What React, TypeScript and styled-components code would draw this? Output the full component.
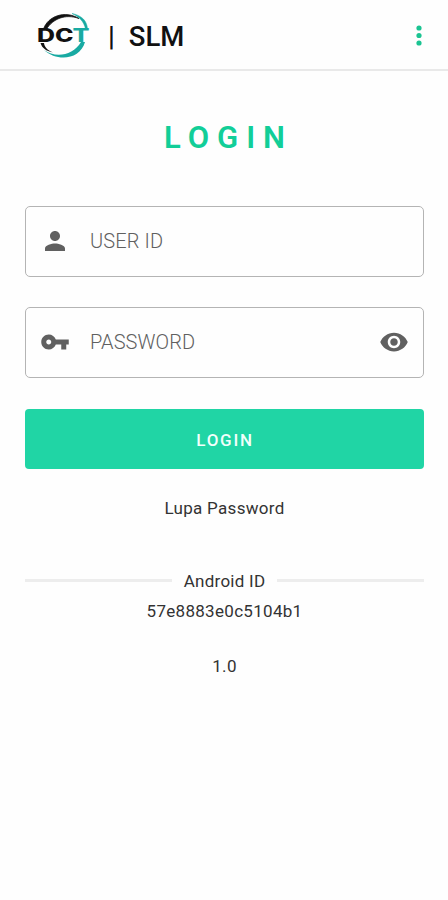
import React from "react";
import styled, { createGlobalStyle } from "styled-components";

const GlobalStyle = createGlobalStyle`
  * { box-sizing: border-box; }
  body { margin: 0; background: #fefefe; font-family: Roboto, "Liberation Sans", sans-serif; }
`;

const Screen = styled.div`
  min-height: 900px;
  display: flex;
  flex-direction: column;
  background: #fefefe;
`;

const Header = styled.header`
  height: 71px;
  display: flex;
  align-items: center;
  padding: 0 22px 0 34px;
  border-bottom: 2px solid #e9e9e9;
`;

const Brand = styled.div`
  display: flex;
  align-items: center;
  margin-left: 16px;
  padding-top: 5px;
  gap: 14px;
  font-size: 27.5px;
  line-height: 32px;
  font-weight: 500;
  color: #111;
`;

const MenuButton = styled.button`
  margin-left: auto;
  padding: 2px 0 0;
  border: 0;
  background: none;
  display: flex;
`;

const Form = styled.main`
  display: flex;
  flex-direction: column;
  padding: 49px 24px 0 25px;
`;

const Title = styled.h1`
  margin: 0 0 50px;
  text-align: center;
  font-size: 31px;
  line-height: 36px;
  font-weight: 600;
  letter-spacing: 8px;
  text-indent: 8px;
  color: #12ce98;
`;

const Field = styled.label`
  height: 71px;
  margin-bottom: 30px;
  padding: 0 14px 1px;
  display: flex;
  align-items: center;
  border: 1.5px solid #b4b4b4;
  border-radius: 5px;
  color: #606060;
`;

const FieldText = styled.span`
  flex: 1;
  margin-left: 20px;
  font-size: 20px;
  line-height: 24px;
  font-weight: 350;
  letter-spacing: 0.1px;
`;

const Submit = styled.button`
  height: 60px;
  margin-top: 1px;
  padding: 2px 0 0;
  border: 0;
  border-radius: 4px;
  background: #20d5a5;
  color: #f2fffb;
  font: 500 17px/20px Roboto, sans-serif;
  letter-spacing: 1.7px;
  text-indent: 1px;
`;

const Caption = styled.p<{ $top: number; $spacing: number }>`
  margin: ${(p) => p.$top}px 0 0;
  text-align: center;
  font-size: 17px;
  line-height: 20px;
  letter-spacing: ${(p) => p.$spacing}px;
  color: #333;
`;

const Divider = styled.div`
  margin-top: 53px;
  display: flex;
  align-items: center;
  gap: 12px;
  font-size: 17px;
  line-height: 20px;
  letter-spacing: 0.25px;
  color: #333;
`;

const Rule = styled.span`
  flex: 1;
  height: 3px;
  margin-bottom: 2px;
  background: #ededed;
`;

const Logo = () => (
  <svg width="58" height="48" viewBox="34 11 58 48" role="img" aria-label="DCT">
    <path d="M43.500 29 C48 16 65 10 79 18.500 C65 13.500 53 19 46.500 29Z" fill="#111" stroke="#111" strokeWidth=".8" />
    <path d="M72 13.500 C82 15.500 87 21 87.500 29 H85.500 C84 21.500 79 16.500 72 13.500Z" fill="#18aaa2" stroke="#18aaa2" strokeWidth=".5" />
    <path d="M40.500 43 C42 48 46 51 53 52.500 C47 50 44.500 47 44 43Z" fill="#111" />
    <path d="M44 50 C55 58 73 56 81 42 H85 C80 60 57 62 44 50Z" fill="#18aaa2" />
    <g fontFamily="Inter, sans-serif" fontWeight="800" fontSize="18.500">
      <text x="37" y="42.200" textLength="36.500" lengthAdjust="spacingAndGlyphs" fill="#111">DC</text>
      <text x="72.500" y="42.200" textLength="17" lengthAdjust="spacingAndGlyphs" fill="#18aaa2">T</text>
    </g>
  </svg>
);

const Glyph = ({ d, box = "0 0 24 24" }: { d: string; box?: string }) => (
  <svg width="30" height="30" viewBox={box} fill="currentColor" aria-hidden="true">
    <path d={d} />
  </svg>
);

const PERSON = "M12 12c2.210 0 4-1.790 4-4s-1.790-4-4-4-4 1.790-4 4 1.790 4 4 4zm0 2c-2.670 0-8 1.340-8 4v2h16v-2c0-2.660-5.330-4-8-4z";
const KEY = "M12.650 10C11.830 7.670 9.610 6 7 6c-3.310 0-6 2.690-6 6s2.690 6 6 6c2.610 0 4.830-1.670 5.650-4H17v4h4v-4h2v-4H12.650zM7 14c-1.100 0-2-.9-2-2s.9-2 2-2 2 .9 2 2-.9 2-2 2z";
const EYE = "M12 4.500C7 4.500 2.730 7.610 1 12c1.730 4.390 6 7.500 11 7.500s9.270-3.110 11-7.500c-1.730-4.390-6-7.500-11-7.500zM12 17c-2.760 0-5-2.240-5-5s2.240-5 5-5 5 2.240 5 5-2.240 5-5 5zm0-8c-1.660 0-3 1.340-3 3s1.340 3 3 3 3-1.340 3-3-1.340-3-3-3z";

export default function App() {
  return (
    <Screen>
      <GlobalStyle />
      <Header>
        <Logo />
        <Brand>
          <span>|</span>
          <span>SLM</span>
        </Brand>
        <MenuButton aria-label="Menu">
          <svg width="14" height="24" viewBox="0 0 14 24" fill="#1bc492">
            <circle cx="7" cy="4" r="2.600" />
            <circle cx="7" cy="11.500" r="2.600" />
            <circle cx="7" cy="19" r="2.600" />
          </svg>
        </MenuButton>
      </Header>
      <Form>
        <Title>LOGIN</Title>
        <Field>
          <Glyph d={PERSON} />
          <FieldText>USER ID</FieldText>
        </Field>
        <Field>
          <Glyph d={KEY} />
          <FieldText>PASSWORD</FieldText>
          <Glyph d={EYE} />
        </Field>
        <Submit>LOGIN</Submit>
        <Caption $top={29} $spacing={0.3}>Lupa Password</Caption>
        <Divider>
          <Rule />
          <span>Android ID</span>
          <Rule />
        </Divider>
        <Caption $top={10} $spacing={0.3}>57e8883e0c5104b1</Caption>
        <Caption $top={35} $spacing={0.3}>1.0</Caption>
      </Form>
    </Screen>
  );
}
